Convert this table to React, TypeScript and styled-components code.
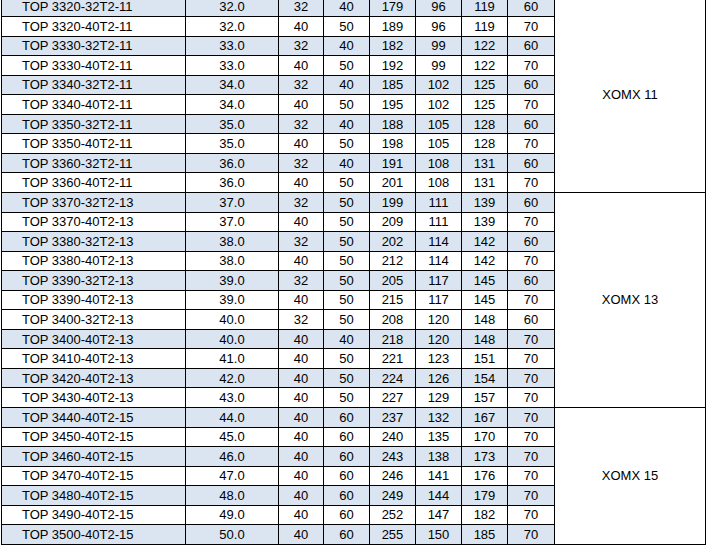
import styled, { createGlobalStyle } from "styled-components";

const GlobalStyle = createGlobalStyle`
  html, body {
    margin: 0;
    padding: 0;
    background: #ffffff;
    overflow: hidden;
  }
`;

const Page = styled.div`
  width: 711px;
  height: 547px;
  overflow: hidden;
  background: #ffffff;
`;

const Table = styled.table`
  border-collapse: collapse;
  table-layout: fixed;
  width: 704px;
  margin: -3.5px 0 0 1px;
  font-family: "Liberation Sans", Arial, sans-serif;
  font-size: 13px;
  color: #000000;
`;

const Row = styled.tr<{ $shaded: boolean }>`
  height: 19.55px;
  background: ${(p) => (p.$shaded ? "#dbe5f1" : "#ffffff")};
`;

const Cell = styled.td`
  border: 1px solid #000000;
  padding: 0;
  text-align: center;
  vertical-align: middle;
  line-height: 15px;
  white-space: nowrap;
`;

const NameCell = styled(Cell)`
  text-align: left;
  padding-left: 20px;
`;

const SeriesCell = styled(Cell)`
  background: #ffffff;
`;

type Item = { name: string; v: (string | number)[]; shaded: boolean };
type Group = { series: string; items: Item[] };

const S = true;
const W = false;

const groups: Group[] = [
  {
    series: "XOMX 11",
    items: [
      { name: "TOP 3320-32T2-11", v: ["32.0", 32, 40, 179, 96, 119, 60], shaded: S },
      { name: "TOP 3320-40T2-11", v: ["32.0", 40, 50, 189, 96, 119, 70], shaded: W },
      { name: "TOP 3330-32T2-11", v: ["33.0", 32, 40, 182, 99, 122, 60], shaded: S },
      { name: "TOP 3330-40T2-11", v: ["33.0", 40, 50, 192, 99, 122, 70], shaded: W },
      { name: "TOP 3340-32T2-11", v: ["34.0", 32, 40, 185, 102, 125, 60], shaded: S },
      { name: "TOP 3340-40T2-11", v: ["34.0", 40, 50, 195, 102, 125, 70], shaded: W },
      { name: "TOP 3350-32T2-11", v: ["35.0", 32, 40, 188, 105, 128, 60], shaded: S },
      { name: "TOP 3350-40T2-11", v: ["35.0", 40, 50, 198, 105, 128, 70], shaded: W },
      { name: "TOP 3360-32T2-11", v: ["36.0", 32, 40, 191, 108, 131, 60], shaded: S },
      { name: "TOP 3360-40T2-11", v: ["36.0", 40, 50, 201, 108, 131, 70], shaded: W },
    ],
  },
  {
    series: "XOMX 13",
    items: [
      { name: "TOP 3370-32T2-13", v: ["37.0", 32, 50, 199, 111, 139, 60], shaded: S },
      { name: "TOP 3370-40T2-13", v: ["37.0", 40, 50, 209, 111, 139, 70], shaded: W },
      { name: "TOP 3380-32T2-13", v: ["38.0", 32, 50, 202, 114, 142, 60], shaded: S },
      { name: "TOP 3380-40T2-13", v: ["38.0", 40, 50, 212, 114, 142, 70], shaded: W },
      { name: "TOP 3390-32T2-13", v: ["39.0", 32, 50, 205, 117, 145, 60], shaded: S },
      { name: "TOP 3390-40T2-13", v: ["39.0", 40, 50, 215, 117, 145, 70], shaded: W },
      { name: "TOP 3400-32T2-13", v: ["40.0", 32, 50, 208, 120, 148, 60], shaded: W },
      { name: "TOP 3400-40T2-13", v: ["40.0", 40, 40, 218, 120, 148, 70], shaded: S },
      { name: "TOP 3410-40T2-13", v: ["41.0", 40, 50, 221, 123, 151, 70], shaded: W },
      { name: "TOP 3420-40T2-13", v: ["42.0", 40, 50, 224, 126, 154, 70], shaded: S },
      { name: "TOP 3430-40T2-13", v: ["43.0", 40, 50, 227, 129, 157, 70], shaded: W },
    ],
  },
  {
    series: "XOMX 15",
    items: [
      { name: "TOP 3440-40T2-15", v: ["44.0", 40, 60, 237, 132, 167, 70], shaded: S },
      { name: "TOP 3450-40T2-15", v: ["45.0", 40, 60, 240, 135, 170, 70], shaded: W },
      { name: "TOP 3460-40T2-15", v: ["46.0", 40, 60, 243, 138, 173, 70], shaded: S },
      { name: "TOP 3470-40T2-15", v: ["47.0", 40, 60, 246, 141, 176, 70], shaded: W },
      { name: "TOP 3480-40T2-15", v: ["48.0", 40, 60, 249, 144, 179, 70], shaded: S },
      { name: "TOP 3490-40T2-15", v: ["49.0", 40, 60, 252, 147, 182, 70], shaded: W },
      { name: "TOP 3500-40T2-15", v: ["50.0", 40, 60, 255, 150, 185, 70], shaded: S },
    ],
  },
];

const colWidths = [184, 93, 45, 46, 46, 46, 46, 47, 151];

export default function App() {
  return (
    <Page>
      <GlobalStyle />
      <Table>
        <colgroup>
          {colWidths.map((w, i) => (
            <col key={i} style={{ width: w }} />
          ))}
        </colgroup>
        <tbody>
          {groups.map((g) =>
            g.items.map((it, i) => (
              <Row key={it.name} $shaded={it.shaded}>
                <NameCell>{it.name}</NameCell>
                {it.v.map((val, j) => (
                  <Cell key={j}>{val}</Cell>
                ))}
                {i === 0 && <SeriesCell rowSpan={g.items.length}>{g.series}</SeriesCell>}
              </Row>
            ))
          )}
        </tbody>
      </Table>
    </Page>
  );
}
